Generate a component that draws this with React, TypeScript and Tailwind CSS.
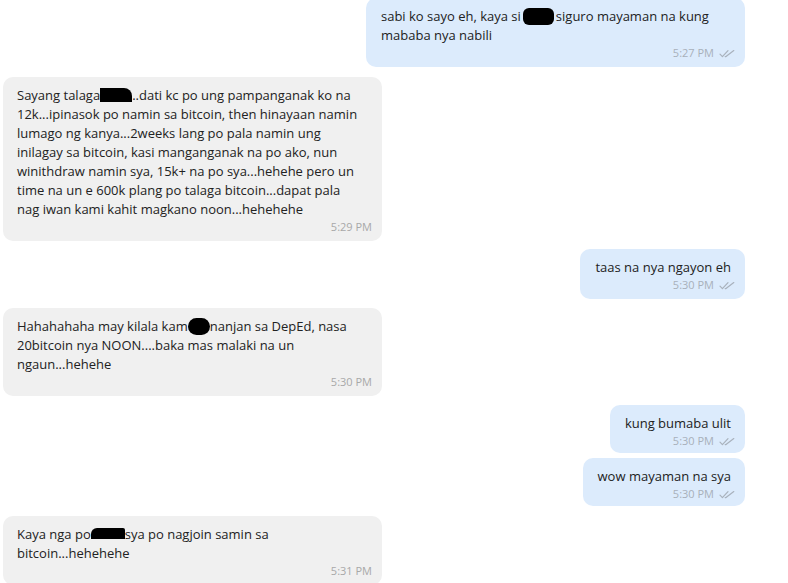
import React from "react";

const Blob = ({ w, h, cls = "" }: { w: number; h: number; cls?: string }) => (
  <span
    className={`inline-block bg-black align-middle ${cls}`}
    style={{ width: w, height: h }}
  />
);

const Checks = () => (
  <svg width="16" height="9" viewBox="0 0 16 9" className="ml-[5px] block" fill="none" stroke="#a9b2bd" strokeWidth="1.2" strokeLinecap="round" strokeLinejoin="round">
    <path d="M1 5.2 L3.4 7.6 L9 1.6" />
    <path d="M6.2 7.6 L7 7.6 L14.8 1.6" />
  </svg>
);

const Left = ({ children, time, cls = "" }: { children: React.ReactNode; time: string; cls?: string }) => (
  <div className={`ml-[3px] w-[379px] rounded-[10px] bg-[#f0f0f0] pl-[14px] pr-[10px] pt-[9px] pb-[6px] ${cls}`}>
    <div className="text-[13px] leading-[19px] text-[#222]">{children}</div>
    <div className="h-[16px] text-right text-[11px] leading-[16px] text-[#a8a8a8]">{time}</div>
  </div>
);

const Right = ({ children, time, cls = "", align = "right" }: { children: React.ReactNode; time: string; cls?: string; align?: string }) => (
  <div className={`self-end mr-[43px] rounded-[10px] bg-[#dcebfc] pl-[15px] pr-[10px] pt-[9px] ${cls}`}>
    <div className={`h-auto pr-[4px] text-[13px] leading-[19px] text-[#222] ${align === "left" ? "text-left" : "text-right"}`}>{children}</div>
    <div className="flex h-[16px] items-center justify-end text-[11px] leading-[16px] text-[#a8b0ba]">
      {time}
      <Checks />
    </div>
  </div>
);

export default function App() {
  return (
    <div
      className="h-[583px] w-[788px] overflow-hidden bg-white"
      style={{ fontFamily: '"Open Sans", "Noto Sans", sans-serif' }}
    >
      <div className="-mt-[2px] flex flex-col">
        <Right time="5:27 PM" cls="w-[379px] pb-[6px]" align="left">
          sabi ko sayo eh, kaya si
          <Blob w={31} h={17} cls="mx-[2px] rounded-[6px] -mt-[2px]" />
          siguro mayaman na kung
          <br />
          mababa nya nabili
        </Right>
        <Left time="5:29 PM" cls="mt-[10px]">
          Sayang talaga
          <Blob w={32} h={14} cls="rounded-tr-[8px] -mt-[4px]" />
          ..dati kc po ung pampanganak ko na
          <br />
          12k...ipinasok po namin sa bitcoin, then hinayaan namin
          <br />
          lumago ng kanya...2weeks lang po pala namin ung
          <br />
          inilagay sa bitcoin, kasi manganganak na po ako, nun
          <br />
          winithdraw namin sya, 15k+ na po sya...hehehe pero un
          <br />
          time na un e 600k plang po talaga bitcoin...dapat pala
          <br />
          nag iwan kami kahit magkano noon...hehehehe
        </Left>
        <Right time="5:30 PM" cls="mt-[8px] pb-[6px]">
          taas na nya ngayon eh
        </Right>
        <Left time="5:30 PM" cls="mt-[9px]">
          Hahahahaha may kilala kam
          <Blob w={22} h={17} cls="rounded-full -mt-[2px]" />
          nanjan sa DepEd, nasa
          <br />
          20bitcoin nya NOON....baka mas malaki na un
          <br />
          ngaun...hehehe
        </Left>
        <Right time="5:30 PM" cls="mt-[9px] pb-[4px]">
          kung bumaba ulit
        </Right>
        <Right time="5:30 PM" cls="mt-[5px] pb-[4px]">
          wow mayaman na sya
        </Right>
        <Left time="5:31 PM" cls="mt-[10px]">
          Kaya nga po
          <Blob w={34} h={11} cls="rounded-tl-[6px] rounded-tr-[2px] -mt-[5px]" />
          sya po nagjoin samin sa
          <br />
          bitcoin...hehehehe
        </Left>
      </div>
    </div>
  );
}
